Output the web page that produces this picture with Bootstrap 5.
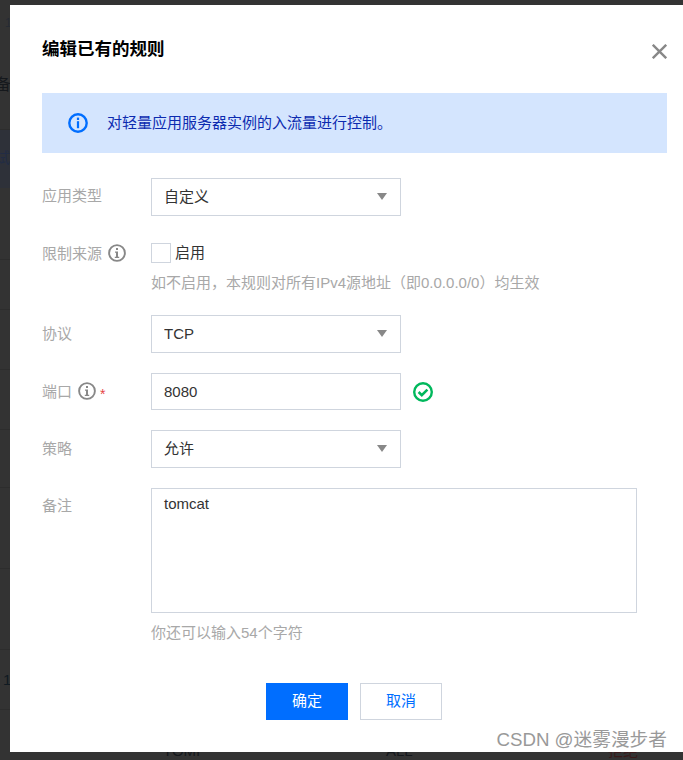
<!DOCTYPE html>
<html lang="zh-CN">
<head>
  <meta charset="UTF-8">
  <title>编辑已有的规则</title>
  <meta name="viewport" content="width=device-width, initial-scale=1">
  <link href="https://cdn.jsdelivr.net/npm/bootstrap@5.3.0/dist/css/bootstrap.min.css" rel="stylesheet">
  <style>
    body {
      background-color: #333;
      font-family: "Liberation Sans", "Noto Sans CJK SC", sans-serif;
      font-size: 15px;
      overflow: hidden;
    }
    .page-behind {
      height: 760px;
      overflow: hidden;
      color: #15181c;
      line-height: 20px;
      white-space: nowrap;
    }
    .behind-row {
      border-bottom: 1px solid #2d2d2d;
      display: flex;
    }
    .behind-row:nth-child(1) { height: 103px; padding-top: 13px; flex-direction: column; margin-left: -5px; border: 0; }
    .behind-row:nth-child(2) { height: 27px; }
    .behind-row:nth-child(3) { height: 58px; padding-top: 18px; margin-left: -5px; background-color: #2e3139; color: #222c44; border: 0; }
    .behind-row:nth-child(4) { height: 72px; }
    .behind-row:nth-child(5) { height: 50px; }
    .behind-row:nth-child(6) { height: 60px; }
    .behind-row:nth-child(7) { height: 60px; }
    .behind-row:nth-child(8) { height: 58px; }
    .behind-row:nth-child(9) { height: 81px; }
    .behind-row:nth-child(10) { height: 81px; }
    .behind-row:nth-child(11) { height: 60px; padding: 20px 0 0 3px; color: #101a22; }
    .behind-row:nth-child(12) { padding-top: 31px; border: 0; }
    .first-faint {
      margin-left: 10px;
      margin-bottom: 42px;
      font-size: 12px;
      color: #262b33;
    }
    .behind-big {
      font-size: 16px;
    }
    .cell-one { margin-left: 163px; width: 223px; }
    .cell-two { width: 222px; }
    .cell-three { color: #3a1a1a; }
    .rule-dialog {
      position: absolute;
      left: 10px;
      top: 5px;
      width: 673px;
      height: 747px;
      background-color: #fff;
      padding: 31px 16px 0 32px;
    }
    .dialog-title {
      font-size: 17.5px;
      font-weight: 700;
      line-height: 26px;
      color: #000;
      margin: 0;
    }
    .dialog-close {
      position: absolute;
      right: 16px;
      top: 39px;
      width: 15px;
      height: 15px;
      padding: 0;
      border: 0;
      background: none;
      display: block;
    }
    .info-strip {
      height: 60px;
      margin-top: 31px;
      padding-left: 26px;
      gap: 19px;
      background-color: #d4e5fe;
      color: #0c2bb0;
      font-size: 15px;
    }
    .field-label {
      width: 109px;
      flex-shrink: 0;
      color: #a8a8a8;
      line-height: 21px;
      gap: 6px;
      padding-top: 8px;
    }
    .field-label-top {
      padding-top: 0;
    }
    .field-label-high {
      padding-top: 7px;
    }
    .rule-form {
      margin-top: 25px;
      display: flex;
      flex-direction: column;
    }
    .gap-after-select { margin-top: 27.5px; }
    .gap-after-hint { margin-top: 22px; }
    .gap-field { margin-top: 20px; }
    .rule-select, .rule-input {
      width: 250px;
      height: 37.5px;
      border: 1px solid #cfd5de;
      border-radius: 0;
      font-size: 15px;
      color: #333;
      padding: 0 12px;
      box-shadow: none;
    }
    .rule-select {
      background-image: url("data:image/svg+xml,%3Csvg xmlns='http://www.w3.org/2000/svg' width='10' height='7'%3E%3Cpath d='M0 0h10L5 7z' fill='%23888'/%3E%3C/svg%3E");
      background-size: 10px 7px;
      background-position: right 13px center;
    }
    .rule-note {
      width: 486px;
      height: 125px;
      border: 1px solid #cfd5de;
      border-radius: 0;
      font-size: 15px;
      line-height: 20px;
      color: #333;
      padding: 5px 12px;
      resize: none;
      box-shadow: none;
    }
    .rule-check[type=checkbox] {
      width: 20px;
      height: 20px;
      margin: 0;
      border: 1px solid #cfd5de;
      border-radius: 0;
    }
    .check-line {
      gap: 4px;
      color: #333;
      line-height: 20px;
    }
    .hint-text {
      color: #a8a8a8;
      line-height: 20px;
    }
    .hint-source { margin-top: 10px; }
    .note-count {
      margin: 10px 0 0 109px;
    }
    .info-mark {
      flex-shrink: 0;
      margin-top: 1px;
    }
    .req-star {
      color: #e54545;
      font-size: 14px;
      line-height: 1;
      margin-left: -2px;
      padding-top: 6px;
    }
    .valid-mark {
      margin: 9px 0 0 12px;
    }
    .dialog-actions {
      margin-top: 40px;
      margin-left: -1px;
      gap: 12px;
    }
    .btn-save, .btn-dismiss {
      width: 82px;
      height: 37px;
      border-radius: 0;
      font-size: 15px;
      padding: 0;
    }
    .btn-save {
      background-color: #006eff;
      border-color: #006eff;
      color: #fff;
    }
    .btn-dismiss {
      background-color: #fff;
      border: 1px solid #cfd5de;
      color: #006eff;
    }
    .wm-text {
      position: absolute;
      right: 16px;
      top: 723px;
      font-size: 18.7px;
      line-height: 24px;
      color: #999;
      white-space: nowrap;
    }
  </style>
</head>
<body>

<!-- page under the dialog, only the edges show -->
<div class="page-behind">
  <div class="behind-row">
    <div class="first-faint">1</div>
    <div class="behind-big">备付</div>
  </div>
  <div class="behind-row"></div>
  <div class="behind-row">试</div>
  <div class="behind-row"></div>
  <div class="behind-row"></div>
  <div class="behind-row"></div>
  <div class="behind-row"></div>
  <div class="behind-row"></div>
  <div class="behind-row"></div>
  <div class="behind-row"></div>
  <div class="behind-row">1</div>
  <div class="behind-row">
    <div class="cell-one">TOMI</div>
    <div class="cell-two">ALL</div>
    <div class="cell-three">拒绝</div>
  </div>
</div>

<div class="rule-dialog">
  <h5 class="dialog-title">编辑已有的规则</h5>
  <button class="dialog-close" type="button" aria-label="关闭">
    <svg class="d-block" width="15" height="15" viewBox="0 0 15 15"><path d="M.8.8l13.4 13.4M14.2.8L.8 14.2" stroke="#888" stroke-width="2.4" fill="none"/></svg>
  </button>

  <div class="info-strip d-flex align-items-center">
    <svg width="20" height="20" viewBox="0 0 20 20"><circle cx="10" cy="10" r="8.7" fill="none" stroke="#006eff" stroke-width="2.4"/><rect x="8.9" y="4.6" width="2.2" height="2.4" fill="#006eff"/><rect x="8.9" y="8.2" width="2.2" height="7" fill="#006eff"/></svg>
    <span>对轻量应用服务器实例的入流量进行控制。</span>
  </div>

  <form class="rule-form">
    <div class="d-flex">
      <div class="field-label field-label-high">应用类型</div>
      <select class="form-select rule-select"><option>自定义</option></select>
    </div>

    <div class="d-flex gap-after-select">
      <div class="field-label field-label-top d-flex align-items-start">限制来源
        <svg class="info-mark" width="18" height="18" viewBox="0 0 18 18"><circle cx="9" cy="9" r="7.9" fill="none" stroke="#888" stroke-width="1.9"/><rect x="8" y="4" width="2" height="2" fill="#888"/><path d="M7 7.6h3v5.2h1.2v1.2H6.8v-1.2H8V8.8H7z" fill="#888"/></svg>
      </div>
      <div>
        <div class="d-flex align-items-center check-line">
          <input class="form-check-input rule-check" type="checkbox" id="limitSource">
          <label for="limitSource">启用</label>
        </div>
        <div class="hint-text hint-source">如不启用，本规则对所有IPv4源地址（即0.0.0.0/0）均生效</div>
      </div>
    </div>

    <div class="d-flex gap-after-hint">
      <div class="field-label">协议</div>
      <select class="form-select rule-select"><option>TCP</option></select>
    </div>

    <div class="d-flex gap-field">
      <div class="field-label d-flex align-items-start">端口
        <svg class="info-mark" width="18" height="18" viewBox="0 0 18 18"><circle cx="9" cy="9" r="7.9" fill="none" stroke="#888" stroke-width="1.9"/><rect x="8" y="4" width="2" height="2" fill="#888"/><path d="M7 7.6h3v5.2h1.2v1.2H6.8v-1.2H8V8.8H7z" fill="#888"/></svg>
        <span class="req-star">*</span>
      </div>
      <input class="form-control rule-input" type="text" value="8080">
      <svg class="valid-mark" width="20" height="20" viewBox="0 0 20 20"><circle cx="10" cy="10" r="8.8" fill="none" stroke="#00b85c" stroke-width="2.4"/><path d="M5.6 10l3.2 3.1 5.6-5.5" fill="none" stroke="#00b85c" stroke-width="2.6"/></svg>
    </div>

    <div class="d-flex gap-field">
      <div class="field-label">策略</div>
      <select class="form-select rule-select"><option>允许</option></select>
    </div>

    <div class="d-flex gap-field">
      <div class="field-label field-label-high">备注</div>
      <textarea class="form-control rule-note">tomcat</textarea>
    </div>

    <div class="hint-text note-count">你还可以输入54个字符</div>

    <div class="d-flex justify-content-center dialog-actions">
      <button type="button" class="btn btn-save">确定</button>
      <button type="button" class="btn btn-dismiss">取消</button>
    </div>
  </form>

  <div class="wm-text">CSDN @迷雾漫步者</div>
</div>

<script src="https://cdn.jsdelivr.net/npm/bootstrap@5.3.0/dist/js/bootstrap.bundle.min.js"></script>
</body>
</html>
